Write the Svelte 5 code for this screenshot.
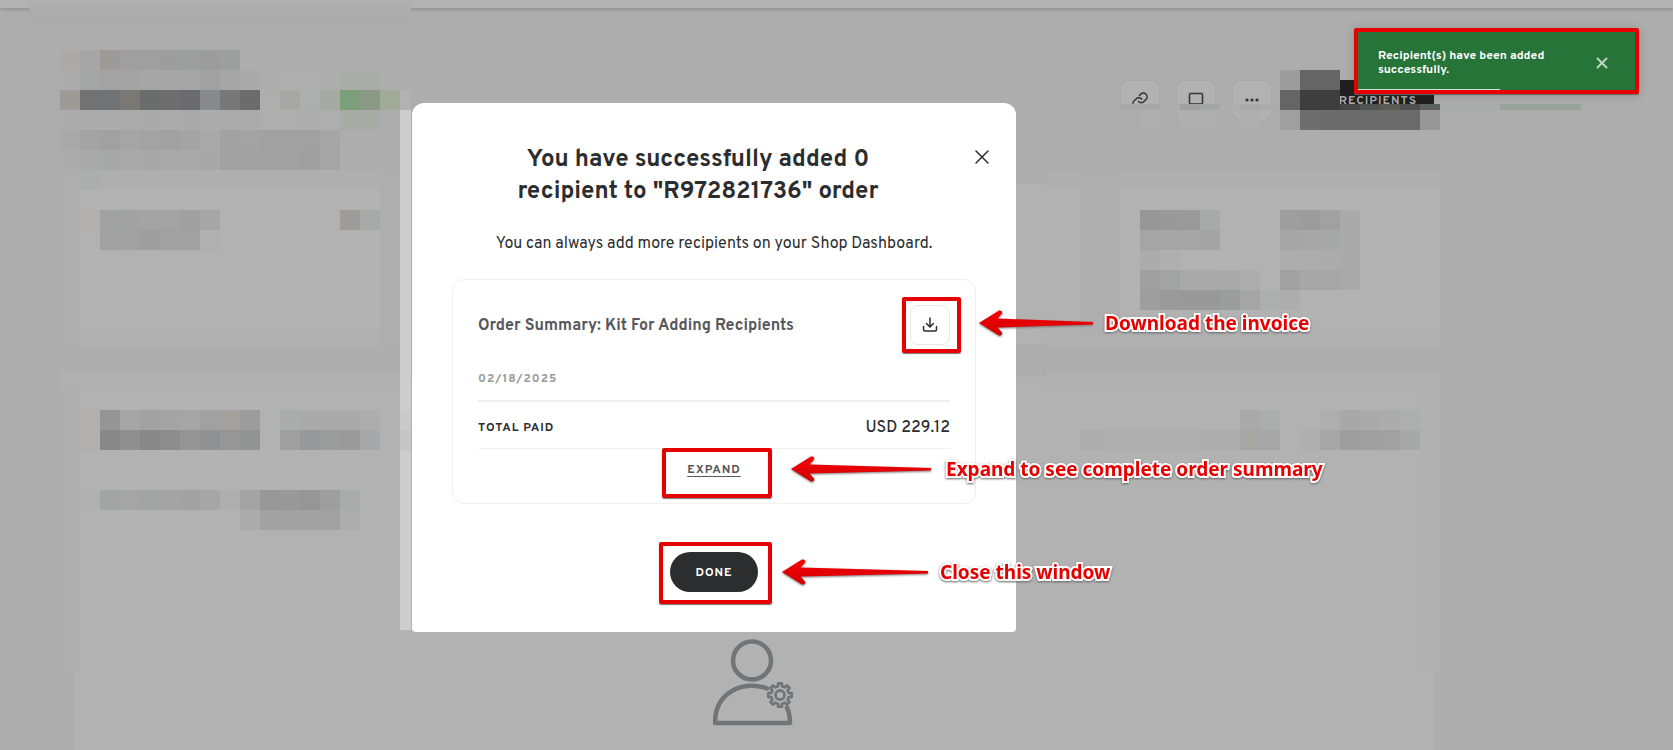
<script lang="ts">
  type Strip = { x: number; y: number; h?: number; w?: number; cells: string };

  // Each token is one cell colour (two digits = grey), "." leaves a hole
  const strips: Strip[] = [
    { x: 30, y: 3, w: 381, h: 7, cells: 'ae' },
    { x: 30, y: 10, w: 381, h: 18, cells: 'ac' },
    { x: 60, y: 50, cells: 'abaaa8 a6 9c9b97 9f 9f 9d 9c9f9d 9c 9d9f9e' },
    { x: 60, y: 70, cells: 'ac a4a6a5 a3 a3 a6 a6 a6 a2 a6 aa ad af ae ad a9aca8 a9aca8' },
    { x: 60, y: 90, cells: '9c9b98 707274 707274 7a7774 6a6d6b 6e 6b6b6d 87898b 77 6c ae a7a7a5 adafae a5aaa3 7a9f7a 8a9a84 9faa98' },
    { x: 60, y: 110, cells: 'ac ac ac ab aa ab aa ac ab ab ae ae ad ae a9aba7 a9aba7' },
    { x: 60, y: 130, cells: 'a9 a3 a1 a5 a3 a1 a4 a9 a2 a3 a1 a1 a1 a6' },
    { x: 60, y: 150, cells: 'ac a9 a6a9a7 a9 a8 a9 a9 a8 a1 a2 a1 a1 9f a5' },
    { x: 60, y: 170, w: 340, cells: 'ae' },
    { x: 80, y: 170, w: 300, cells: 'af' },
    { x: 80, y: 170, cells: 'abaeac' },
    { x: 60, y: 190, w: 340, h: 140, cells: 'ae' },
    { x: 80, y: 190, w: 300, h: 140, cells: 'b2' },
    { x: 80, y: 210, cells: 'b1b0ad 9fa2a0 a2 a4 a3 a0 a6 . . . . . . 9e9d9b a7aaa8' },
    { x: 100, y: 230, cells: 'a1 a2 9e a1 a1 b0' },
    { x: 60, y: 330, w: 340, cells: 'ae' },
    { x: 80, y: 330, w: 300, cells: 'b0' },
    { x: 60, y: 350, w: 340, cells: 'ad' },
    { x: 60, y: 370, w: 340, cells: 'b0' },
    { x: 60, y: 390, w: 20, h: 282, cells: 'ae' },
    { x: 80, y: 410, cells: 'b1b0ad 95 a5 a2 a4 a5 a1 a2a19e 9b9c9d b2 aaadab aa aa aa ad' },
    { x: 80, y: 430, cells: 'b1b0ad 88 8f 88 8d 94 8f9193 96 919492 b2 9f 97989a 9a9d9b 9a a7a8aa' },
    { x: 80, y: 490, cells: 'b0 a2a5a3 a5 a1a4a2 a4 a2 a6 ae a4 98 99 96 9e a9acaa' },
    { x: 240, y: 510, cells: 'ab a2 a2 a2 a2 ad' },
    { x: 400, y: 90, w: 11, cells: 'b2' },
    { x: 400, y: 110, w: 11, h: 520, cells: 'cd' },
    { x: 400, y: 410, w: 11, cells: 'ca' },
    { x: 400, y: 430, w: 11, cells: 'c5' },
    { x: 400, y: 630, w: 11, cells: 'b3' },
    { x: 1120, y: 104, h: 6, cells: 'a8 a8 ad 9f a5a7a6 ae a9 ab' },
    { x: 1120, y: 110, cells: 'ad af . af ae . af' },
    { x: 1280, y: 70, cells: '9d 65 65' },
    { x: 1280, y: 90, cells: '65 3e 3e' },
    { x: 1340, y: 104, h: 6, cells: '45 515453 5a5b53 50 5e6261 a9acaa a9acaa a9acaa' },
    { x: 1500, y: 104, w: 81, h: 6, cells: '97a598' },
    { x: 1280, y: 110, cells: '9f 6e 6c 6b 6b 6b 6b 97' },
    { x: 1047, y: 170, w: 393, cells: 'af' },
    { x: 1080, y: 170, w: 40, h: 160, cells: 'ae' },
    { x: 1120, y: 190, w: 320, h: 140, cells: 'b2' },
    { x: 1140, y: 210, cells: '97 99 9a a7aaa8 . . . 9e 9c a1 aa' },
    { x: 1140, y: 230, cells: 'a5 a5 a5 a3 . . . a6 a7 a6a9a7 aa' },
    { x: 1140, y: 250, cells: 'ac af . . . . . ad ad ac aa' },
    { x: 1140, y: 270, cells: 'a0 a1a4a2 aa aa a9 ad . a2 a7 a7 a9' },
    { x: 1140, y: 290, cells: '9e 9a 99 99 9b9e9c a5 adafae ad' },
    { x: 1047, y: 330, w: 393, cells: 'b0' },
    { x: 1047, y: 350, w: 393, cells: 'ad' },
    { x: 1047, y: 370, w: 393, cells: 'b0' },
    { x: 1420, y: 390, h: 280, cells: 'b1' },
    { x: 1240, y: 410, cells: 'a9 abaead . . ae a8 aa ac acafad' },
    { x: 1080, y: 430, cells: 'ad ae ae ae af ae ad ad a7a7a3 a7 b2 af a7 9e a0 a1 a6a9a7' },
  ];

  const colour = (c: string) => (c.length === 2 ? `#${c}${c}${c}` : `#${c}`);

  const tiles = strips.flatMap(({ x, y, w = 20, h = 20, cells }) =>
    cells
      .split(' ')
      .map((c, i) => ({ x: x + i * w, y, w, h, c }))
      .filter((t) => t.c !== '.')
  );

  // Eight-toothed cog next to the person
  const cog = Array.from({ length: 8 }, (_, i) => i)
    .flatMap((i) =>
      [
        [-0.24, 9],
        [-0.15, 11.8],
        [0.15, 11.8],
        [0.24, 9],
      ].map(([a, r]) => {
        const t = (i * Math.PI) / 4 + a;
        return `${(67 + r * Math.cos(t)).toFixed(1)},${(56 + r * Math.sin(t)).toFixed(1)}`;
      })
    )
    .join(' ');

  let open = true;
  let toast = true;
  const close = () => (open = false);
</script>

{#snippet arrow(length: number)}
  <svg class="arrow" width={length} height="28" viewBox="0 0 {length} 28" aria-hidden="true">
    <path
      d="M1 14 L21 1.500 Q25 1 24 4.500 L19.500 9.500 L{length} 13 V15.500 L19.500 18.500 L24 23.500 Q25 27 21 26.500 Z"
      fill="url(#red)"
    />
  </svg>
{/snippet}

<svg class="defs" width="0" height="0" aria-hidden="true">
  <linearGradient id="red" x1="0" y1="0" x2="0" y2="1">
    <stop offset="0" stop-color="#f80008" />
    <stop offset="1" stop-color="#cf0000" />
  </linearGradient>
</svg>

<div class="page">
  <header class="topbar"></header>
  <main class="content">
    <div class="actions">
      <button class="tool" aria-label="Copy link">
        <svg width="20" height="20" viewBox="0 0 20 20">
          <path d="M8.500 11.500a3.800 3.800 0 0 0 5.500 0l2-2a3.700 3.700 0 0 0-5.300-5.300L9.500 5.400M11.500 9a3.800 3.800 0 0 0-5.500 0l-2 2a3.700 3.700 0 0 0 5.300 5.300" />
        </svg>
      </button>
      <button class="tool" aria-label="Preview">
        <svg width="20" height="20" viewBox="0 0 20 20"><rect x="3.500" y="3.500" width="13" height="10.500" rx="1" /></svg>
      </button>
      <button class="tool" aria-label="More">
        <svg width="20" height="20" viewBox="0 0 20 20" class="dots">
          <circle cx="5" cy="10" r="1.600" /><circle cx="10" cy="10" r="1.600" /><circle cx="15" cy="10" r="1.600" />
        </svg>
      </button>
      <button class="add">RECIPIENTS</button>
    </div>
    <div class="stats">
      <section class="card"></section>
      <section class="card"></section>
      <section class="card"></section>
    </div>
    <section class="card people">
      <svg width="82" height="88" viewBox="0 0 82 88" aria-hidden="true">
        <g fill="none" stroke="#727476" stroke-width="4.500" stroke-linecap="round" stroke-linejoin="round">
          <circle cx="39" cy="21.500" r="19" />
          <path d="M54 49.500C32 41 2 52 2 84H77Q77 75 74 68.500" />
          <polygon points={cog} stroke-width="2.800" />
          <circle cx="67" cy="56" r="4.500" stroke-width="2.800" />
        </g>
      </svg>
    </section>
  </main>
  <svg class="mosaic" width="1673" height="750" shape-rendering="crispEdges" aria-hidden="true">
    {#each tiles as t}
      <rect x={t.x} y={t.y} width={t.w} height={t.h} fill={colour(t.c)} />
    {/each}
  </svg>
</div>

{#if open}
  <div class="overlay">
    <div class="modal" role="dialog" aria-labelledby="modal-title">
      <button class="close" aria-label="Close" on:click={close}>
        <svg width="14" height="14" viewBox="0 0 14 14"><path d="M1 1l12 12M13 1L1 13" /></svg>
      </button>
      <h2 id="modal-title">You have successfully added 0<br />recipient to "R972821736" order</h2>
      <p class="hint">You can always add more recipients on your Shop Dashboard.</p>

      <section class="summary">
        <div class="summary-head">
          <h3>Order Summary: Kit For Adding Recipients</h3>
          <div class="marked">
            <button class="download" aria-label="Download invoice">
              <svg width="16" height="16" viewBox="0 0 16 16">
                <path d="M8 1v8.500M4.500 6.500L8 10l3.500-3.500M1.500 9.500v3q0 1.500 1.500 1.500h10q1.500 0 1.500-1.500v-3" />
              </svg>
            </button>
            <span class="frame frame-download"></span>
          </div>
        </div>
        <time class="date">02/18/2025</time>
        <dl class="total">
          <dt>TOTAL PAID</dt>
          <dd>USD 229.12</dd>
        </dl>
        <div class="marked expand-row">
          <button class="expand">EXPAND</button>
          <span class="frame frame-expand"></span>
        </div>
      </section>

      <div class="marked done-row">
        <button class="done" on:click={close}>DONE</button>
        <span class="frame frame-done"></span>
      </div>

      <div class="note note-download">{@render arrow(115)}<span>Download the invoice</span></div>
      <div class="note note-expand">{@render arrow(141)}<span>Expand to see complete order summary</span></div>
      <div class="note note-done">{@render arrow(147)}<span>Close this window</span></div>
    </div>
  </div>
{/if}

{#if toast}
  <div class="toast" role="status">
    <p>Recipient(s) have been added successfully.</p>
    <button aria-label="Dismiss" on:click={() => (toast = false)}>
      <svg width="12" height="12" viewBox="0 0 12 12"><path d="M1.500 1.500l9 9M10.500 1.500l-9 9" /></svg>
    </button>
  </div>
{/if}

<style>
  :global(body) {
    background: #adadad;
    color: #2c2d2f;
    font-family: Overpass, Roboto, 'Liberation Sans', sans-serif;
    font-size: 16px;
    line-height: 24px;
  }
  h2,
  h3,
  p,
  dl,
  dd {
    margin: 0;
  }
  button {
    display: flex;
    align-items: center;
    justify-content: center;
    padding: 0;
    border: 0;
    background: none;
    color: inherit;
    font: inherit;
    cursor: pointer;
  }
  button svg {
    fill: none;
    stroke: currentColor;
    stroke-width: 1.5;
    stroke-linecap: round;
    stroke-linejoin: round;
  }
  .defs {
    position: absolute;
  }

  .page {
    position: relative;
    display: flex;
    flex-direction: column;
    min-height: 100vh;
    overflow: hidden;
  }
  .topbar {
    height: 8px;
    background: #b2b2b2;
    box-shadow: 0 1px 4px #888;
  }
  .content {
    flex: 1;
    display: flex;
    flex-direction: column;
    max-width: 1360px;
    width: calc(100% - 74px);
    margin-left: 74px;
  }
  .actions {
    display: flex;
    justify-content: flex-end;
    gap: 16px;
    padding: 72px 0 62px;
  }
  .tool {
    box-sizing: border-box;
    width: 40px;
    height: 40px;
    border: 1px solid #a8a8a8;
    border-radius: 8px;
    background: #b2b2b2;
    color: #333;
  }
  .tool .dots {
    fill: currentColor;
    stroke: none;
  }
  .add {
    width: 146px;
    height: 40px;
    box-sizing: border-box;
    justify-content: flex-end;
    padding: 2px 17px 0 0;
    border-radius: 8px;
    background: #202020;
    color: #a9a9a9;
    font-size: 12px;
    font-weight: 700;
    letter-spacing: 1px;
  }
  .card {
    background: #b2b2b2;
  }
  .stats {
    display: grid;
    grid-template-columns: 326px 1fr 320px;
    gap: 20px;
  }
  .stats .card {
    height: 161px;
    border-top: 1px solid #a8a8a8;
    border-bottom: 1px solid #a8a8a8;
  }
  .people {
    flex: 1;
    display: flex;
    justify-content: center;
    align-items: flex-start;
    margin-top: 32px;
    padding: 262px 0 22px;
  }
  .mosaic {
    position: absolute;
    top: 0;
    left: 0;
  }

  .overlay {
    position: absolute;
    top: 0;
    left: 0;
    right: 0;
    display: flex;
    justify-content: center;
    padding: 103px 245px 0 0;
  }
  .modal {
    position: relative;
    box-sizing: border-box;
    width: 604px;
    padding: 40px;
    border-radius: 12px 12px 4px 4px;
    background: #fff;
  }
  .close {
    position: absolute;
    top: 42px;
    right: 22px;
    width: 24px;
    height: 24px;
  }
  h2 {
    padding: 1px 32px 0 0;
    font-size: 24px;
    font-weight: 700;
    line-height: 32px;
    text-align: center;
  }
  .hint {
    margin-top: 24px;
    text-align: center;
  }
  .summary {
    margin-top: 23px;
    padding: 25px;
    border: 1px solid #efefef;
    border-radius: 12px;
  }
  .summary-head {
    display: flex;
    align-items: center;
    justify-content: space-between;
  }
  h3 {
    padding-top: 2px;
    color: #57585a;
    font-size: 16px;
    font-weight: 700;
  }
  .marked {
    position: relative;
  }
  .download {
    box-sizing: border-box;
    width: 40px;
    height: 40px;
    border: 1px solid #e8e8e8;
    border-radius: 8px;
  }
  .date,
  dt,
  .expand,
  .done {
    font-size: 12px;
    font-weight: 700;
    line-height: 16px;
    letter-spacing: 1px;
  }
  .date {
    display: block;
    padding: 26px 0 13px;
    border-bottom: 2px solid #efefef;
    color: #999;
  }
  .total {
    box-sizing: border-box;
    display: flex;
    align-items: center;
    justify-content: space-between;
    height: 47px;
    padding-top: 5px;
    border-bottom: 1px solid #efefef;
  }
  dd {
    font-weight: 500;
  }
  .expand-row,
  .done-row {
    display: flex;
    justify-content: center;
  }
  .expand-row {
    padding: 13px 0 0;
  }
  .expand {
    color: #57585a;
    text-decoration: underline;
    text-underline-offset: 3px;
  }
  .done-row {
    margin-top: 48px;
  }
  .done {
    height: 40px;
    padding: 1px 25px 0;
    border-radius: 20px;
    background: #2c2d2f;
    color: #fff;
  }

  /* red markers and their captions */
  .frame {
    position: absolute;
    box-sizing: border-box;
    border: 4px solid #e60000;
    border-radius: 2px;
    box-shadow: 0 1px 1px #777;
    pointer-events: none;
  }
  .frame-download {
    inset: -8px -11px -8px -8px;
  }
  .frame-expand {
    top: -1px;
    left: 184px;
    width: 110px;
    height: 50px;
  }
  .frame-done {
    top: -10px;
    left: 207px;
    width: 113px;
    height: 62px;
  }
  .note {
    position: absolute;
    display: flex;
    align-items: center;
    gap: 12px;
    color: #e60000;
    font-family: 'Noto Sans', 'Open Sans', sans-serif;
    font-size: 19px;
    font-weight: 700;
    line-height: 28px;
    white-space: nowrap;
  }
  .note span {
    -webkit-text-stroke: 4px #fff;
    paint-order: stroke fill;
    filter: drop-shadow(0 1px 1px #666);
  }
  .arrow {
    filter: drop-shadow(0 1px 1px #777);
  }
  .note-download {
    top: 206px;
    left: 566px;
  }
  .note-expand {
    top: 352px;
    left: 378px;
    gap: 15px;
  }
  .note-done {
    top: 455px;
    left: 369px;
  }

  .toast {
    position: absolute;
    top: 28px;
    right: 34px;
    box-sizing: border-box;
    display: flex;
    align-items: center;
    justify-content: space-between;
    width: 285px;
    height: 66px;
    padding: 3px 27px 0 20px;
    border: 4px solid #e60000;
    border-radius: 2px;
    background: linear-gradient(#d5e3d8, #d5e3d8) left bottom / 142px 1px no-repeat #267437;
    color: #fff;
    box-shadow: 0 1px 1px #666, 0 1px 10px 1px #0002;
  }
  .toast p {
    max-width: 180px;
    font-size: 12px;
    font-weight: 700;
    line-height: 14px;
  }
  .toast button {
    color: #bfd6c4;
  }
  .toast button svg {
    stroke-width: 2;
  }
</style>
